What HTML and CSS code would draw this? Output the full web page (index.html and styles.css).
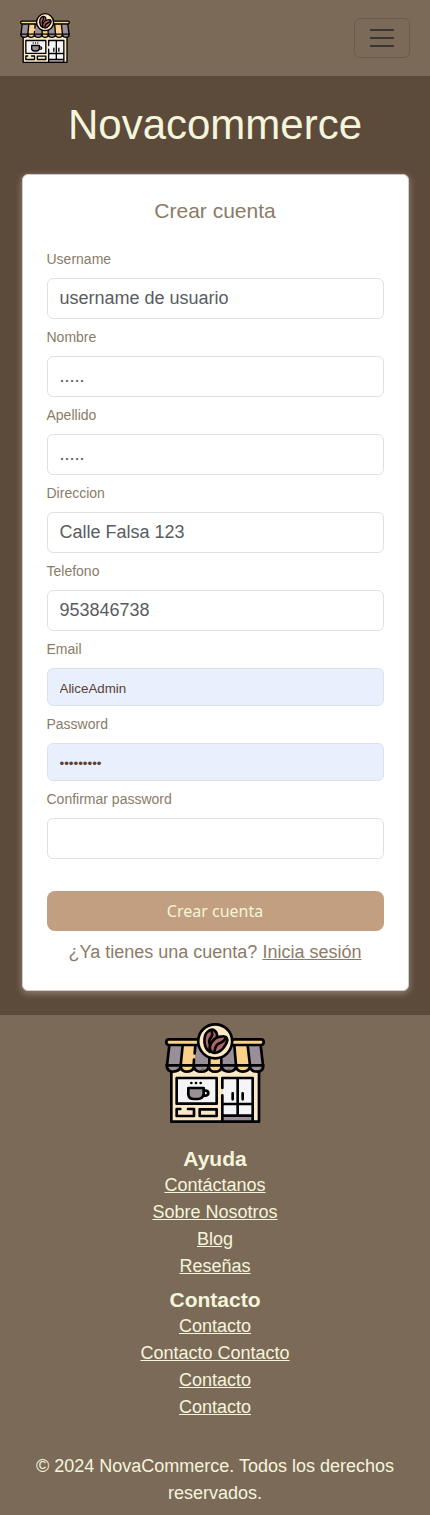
FILE: index.html
```html
<!DOCTYPE html>
<html lang="es">
<head>
<meta charset="utf-8">
<meta name="viewport" content="width=device-width, initial-scale=1">
<title>Novacommerce</title>
<link rel="stylesheet" href="styles.css">
</head>
<body>
<svg class="defs" width="0" height="0" aria-hidden="true">
  <symbol id="shop" viewBox="30 39 300 300">
    <path d="M49 180H312V336H49Z" fill="#fce8c4"/>
    <path d="M65 204H185V281H65ZM204 204H291V330H204Z" fill="#f5f5f8"/>
    <path d="M204 318H291V333H204Z" fill="#9a8e99"/>
    <path d="M43 106H318L325 167Q325 184 309 184Q294 184 290 174Q279 190 264 183L255 174Q239 190 222 174Q204 190 187 181L180 174Q163 190 143 174Q127 190 108 179L101 174Q91 184 78 184L68 174Q50 190 35 174Z" fill="#9a8e99"/>
    <path d="M83 106H123L117 174Q109 185 98 185Q82 184 79 167ZM163 145H199V174Q181 194 163 174ZM238 106H279L287 174Q266 193 246 174Z" fill="#fbd089"/>
    <path d="M36 88H325V104H36Z" fill="#fbd089"/>
    <g fill="none" stroke="#000" stroke-width="8" stroke-linecap="round" stroke-linejoin="round">
      <path d="M132 88H42Q34 88 34 96Q34 105 42 105H137M228 88H318Q326 88 326 96Q326 105 318 105H222M43 106L36 166M317 106L324 166M83 106L77 166M121 106L119 130M117 149L116 166M278 106L285 166M238 106L243 166M163 146V166M199 146V166"/>
      <path d="M35 166H325M35 166Q36 185 54 185Q73 185 77 170Q80 185 97 185Q113 185 117 170Q120 185 139 185Q158 185 161 170Q164 185 180 185Q197 185 200 170Q204 185 221 185Q239 185 243 170Q247 185 263 185Q281 185 285 170Q288 185 307 185Q325 185 325 166"/>
      <path d="M49 186V335H312V186M65 204H185V281H65ZM202 234V204H293V333M202 256V333M248 204V316M202 282H293M202 317H293M233 250V268M263 250V268M76 297H65V318H117V297H99M134 298H185V318H134Z"/>
      <path d="M100 234H146V253Q143 267 129 267H117Q101 267 100 253Z" fill="#9a8e99"/>
      <path d="M147 242H153Q160 243 160 251Q159 257 146 257M109 219H109.1M123 219H123.1M137 219H137.1"/>
      <circle cx="180.500" cy="94" r="51" fill="#fce8c4"/>
      <path d="M165 126C144 114 144 77 158 65C175 51 187 64 186 81L181 89Q167 97 165 111Z" fill="#ad6669"/>
      <path d="M169 125C156 110 175 82 196 80C214 75 222 87 213 102C203 122 183 136 169 125Z" fill="#ad6669"/>
      <path d="M169 62Q175 76 167 83Q160 91 165 105M213 82Q207 96 195 99Q181 104 179 122"/>
    </g>
  </symbol>
</svg>
<nav class="navbar">
  <a class="brand" href="#" aria-label="Novacommerce"><svg class="brand-logo"><use href="#shop"/></svg></a>
  <button class="toggler" type="button" aria-label="Menú">
    <svg class="toggler-icon" viewBox="0 0 24 24"><path d="M0 4H24M0 12H24M0 20H24" stroke="#393735" stroke-width="2"/></svg>
  </button>
</nav>
<main class="main">
  <h1 class="title">Novacommerce</h1>
  <section class="card">
    <h2 class="card-title">Crear cuenta</h2>
    <form class="form">
      <div class="field"><label class="label" for="user">Username</label><input class="control" id="user" type="text" placeholder="username de usuario"></div>
      <div class="field"><label class="label" for="name">Nombre</label><input class="control" id="name" type="text" placeholder="....."></div>
      <div class="field"><label class="label" for="surname">Apellido</label><input class="control" id="surname" type="text" placeholder="....."></div>
      <div class="field"><label class="label" for="address">Direccion</label><input class="control" id="address" type="text" placeholder="Calle Falsa 123"></div>
      <div class="field"><label class="label" for="phone">Telefono</label><input class="control" id="phone" type="text" placeholder="953846738"></div>
      <div class="field"><label class="label" for="email">Email</label><input class="control filled" id="email" type="text" value="AliceAdmin"></div>
      <div class="field"><label class="label" for="pass">Password</label><input class="control filled" id="pass" type="password" value="alice1234"></div>
      <div class="field"><label class="label" for="confirm">Confirmar password</label><input class="control" id="confirm" type="password"></div>
      <button class="submit" type="button">Crear cuenta</button>
    </form>
    <p class="login">¿Ya tienes una cuenta? <a href="#">Inicia sesión</a></p>
  </section>
</main>
<footer class="footer">
  <svg class="footer-logo"><use href="#shop"/></svg>
  <section class="links">
    <h3 class="links-title">Ayuda</h3>
    <a href="#">Contáctanos</a>
    <a href="#">Sobre Nosotros</a>
    <a href="#">Blog</a>
    <a href="#">Reseñas</a>
  </section>
  <section class="links">
    <h3 class="links-title">Contacto</h3>
    <a href="#">Contacto</a>
    <a href="#">Contacto Contacto</a>
    <a href="#">Contacto</a>
    <a href="#">Contacto</a>
  </section>
  <p class="copyright">© 2024 NovaCommerce. Todos los derechos reservados.</p>
</footer>
</body>
</html>
```

FILE: styles.css
```css
* { box-sizing: border-box; }
body {
  margin: 0;
  background: #5c4a3b;
  color: #f5f5dc;
  font: 18px/27px "Liberation Sans", Arial, sans-serif;
}
h1, h2, h3, p { margin: 0; }
a { color: inherit; }
.defs { display: block; height: 0; }
.navbar {
  display: flex;
  justify-content: space-between;
  align-items: center;
  height: 76px;
  padding: 0 20px;
  background: #7b6a58;
}
.brand, .brand-logo { display: block; width: 50px; height: 50px; }
.toggler {
  display: flex;
  align-items: center;
  justify-content: center;
  width: 56px;
  height: 40px;
  padding: 0;
  border: 1px solid #6b5b4c;
  border-radius: 6px;
  background: none;
}
.toggler-icon { width: 24px; height: 24px; }
.main { padding: 24px 21.5px; }
.title {
  margin-bottom: 24px;
  font-size: 42px;
  font-weight: 400;
  line-height: 50px;
  text-align: center;
}
.card {
  height: 817px;
  padding: 24px;
  border: 1px solid #cfcdca;
  border-radius: 6px;
  background: #fff;
  box-shadow: 0 2px 6px 1px #8b7b68;
  color: #8b7b68;
}
.card-title {
  margin-bottom: 27px;
  font-size: 21px;
  font-weight: 400;
  line-height: 23px;
  text-align: center;
}
.form { display: flex; flex-direction: column; }
.field { display: flex; flex-direction: column; gap: 8px; margin-bottom: 8px; }
.label { font-size: 14px; line-height: 21px; }
.control {
  width: 100%;
  height: 41px;
  padding: 6px 12px;
  border: 1px solid #dee2e6;
  border-radius: 6px;
  outline: none;
  background: #fff;
  color: #5c4033;
  font: 18px/27px "Liberation Sans", Arial, sans-serif;
}
.control::placeholder { color: #595c5f; opacity: 1; }
.control.filled {
  height: 38px;
  padding-top: 8px;
  background: #e8f0fe;
  font-size: 13.333px;
  line-height: 24px;
}
.submit {
  height: 40px;
  margin-top: 24px;
  padding: 0;
  border: 0;
  border-radius: 8px;
  background: #c19f80;
  color: #f5f5dc;
  font: 16px/24px "Noto Sans", sans-serif;
}
.login { padding-top: 8px; text-align: center; }
.footer {
  display: flex;
  flex-direction: column;
  align-items: center;
  height: 500px;
  padding: 8px 16px;
  background: #7b6a58;
  text-align: center;
}
.footer-logo { width: 100px; height: 100px; margin-bottom: 23px; }
.links {
  display: flex;
  flex-direction: column;
  align-items: center;
  margin-bottom: 7px;
}
.links-title { margin-bottom: 1px; font-size: 21px; line-height: 25px; }
.copyright { margin-top: 25px; }
```
